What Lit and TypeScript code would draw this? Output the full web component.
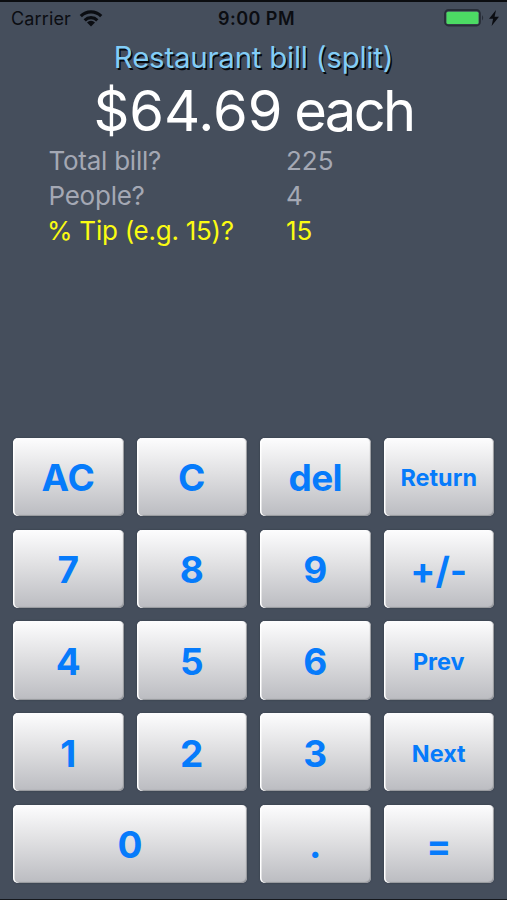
import { LitElement, html, css, svg } from "lit";
import { customElement } from "lit/decorators.js";
import { classMap } from "lit/directives/class-map.js";

const KEYS = ["AC", "C", "del", "Return", "7", "8", "9", "+/-", "4", "5", "6", "Prev", "1", "2", "3", "Next", "0", ".", "="];
const SMALL = ["Return", "Prev", "Next"];
const FIELDS = [
  { label: "Total bill?", value: "225", cls: "total" },
  { label: "People?", value: "4", cls: "people" },
  { label: "% Tip (e.g. 15)?", value: "15", cls: "tip" },
];

@customElement("app-root")
export class AppRoot extends LitElement {
  static styles = css`
    :host {
      display: flex;
      flex-direction: column;
      box-sizing: border-box;
      width: 507px;
      height: 900px;
      background: #454e5c;
      border-top: 2px solid #0b0d10;
      border-bottom: 1px solid #15181d;
      font-family: Inter, "Liberation Sans", sans-serif;
      overflow: hidden;
      white-space: nowrap;
    }
    .status {
      display: grid;
      grid-template-columns: 1fr auto 1fr;
      align-items: center;
      height: 32px;
      padding: 0 8px 0 11px;
      font-size: 18px;
      color: #0b0d12;
    }
    .left { display: flex; align-items: center; gap: 8px; }
    .carrier { letter-spacing: 0.15px; }
    .time { font-weight: 600; letter-spacing: 0.45px; padding-left: 3px; }
    .right { display: flex; align-items: center; justify-content: flex-end; gap: 4px; }
    svg { display: block; }
    .title {
      height: 45px;
      line-height: 47px;
      text-align: center;
      font-size: 29.5px;
      letter-spacing: -0.25px;
      color: #82cdf7;
      text-shadow: 1.5px 1.5px 0.5px #05080c;
    }
    .result {
      height: 61px;
      line-height: 64px;
      text-align: center;
      font-size: 56px;
      color: #fff;
    }
    .each { letter-spacing: -2.6px; margin-left: -4px; }
    .fields { padding: 3px 0 0 48.5px; height: 295px; }
    .field {
      display: grid;
      grid-template-columns: 237.5px 1fr;
      height: 35px;
      line-height: 36px;
      font-size: 26px;
      color: #a4a8b4;
    }
    .label { letter-spacing: -0.25px; }
    .field.tip { color: #fbfb12; }
    .tip .label { letter-spacing: -0.25px; margin-left: -1.5px; }
    .pad {
      display: grid;
      grid-template-columns: repeat(4, 1fr);
      grid-auto-rows: 78.4px;
      gap: 13.3px 13px;
      padding: 0 13px;
    }
    .key {
      display: flex;
      align-items: center;
      justify-content: center;
      margin: 0;
      padding: 1.5px 0 0;
      border: 0;
      border-radius: 5px;
      font: 700 37px Inter, "Liberation Sans", sans-serif;
      color: #067bfb;
      background: linear-gradient(#fdfdfe, #e0e0e2 45%, #bbbcc1);
      box-shadow: inset 1.5px 0 0.5px #fff, inset -1px -1px 1px #96989d, 0 0 2px #343b47;
    }
    .key.small { font-size: 23.4px; }
    .key.word { letter-spacing: -0.7px; }
    .key.op { padding-top: 4px; font-feature-settings: "calt" 0; }
    .key.wide { grid-column: span 2; }
  `;

  render() {
    return html`
      <div class="status">
        <div class="left">
          <span class="carrier">Carrier</span>
          <svg width="24" height="18" viewBox="0 0 24 18">
            ${svg`<g fill="none" stroke="#0b0d12" stroke-width="3.2">
              <path d="M1.8 7.2a14.4 14.4 0 0 1 20.4 0"/>
              <path d="M5.7 11.3a8.9 8.9 0 0 1 12.6 0"/></g>
              <path d="M12 17.4l-4-4a5.6 5.6 0 0 1 8 0z" fill="#0b0d12"/>`}
          </svg>
        </div>
        <span class="time">9:00 PM</span>
        <div class="right">
          <svg width="41" height="18" viewBox="0 0 41 18">
            <rect x="1" y="1" width="35" height="15.5" rx="3.5" fill="#454e5c" stroke="#282e38" stroke-width="1.8" />
            <rect x="2.5" y="2.7" width="32" height="12.2" rx="1.5" fill="#4cdb64" />
            <path d="M38 6q2.4 2.8 0 5.6z" fill="#282e38" />
          </svg>
          <svg width="10" height="16" viewBox="0 0 10 16">
            <path d="M7 0L0 8.8h4.1L2.6 16 10 6.8H5.6z" fill="#0b0d12" />
          </svg>
        </div>
      </div>
      <div class="title">Restaurant bill (split)</div>
      <div class="result">$64.69 <span class="each">each</span></div>
      <div class="fields">
        ${FIELDS.map((f) => html`<div class="field ${f.cls}"><span class="label">${f.label}</span><span>${f.value}</span></div>`)}
      </div>
      <div class="pad">
        ${KEYS.map((k) => html`<button class=${classMap({ key: true, small: SMALL.includes(k), word: k === "del", op: k === "+/-" || k === "=", wide: k === "0" })}>${k}</button>`)}
      </div>
    `;
  }
}
